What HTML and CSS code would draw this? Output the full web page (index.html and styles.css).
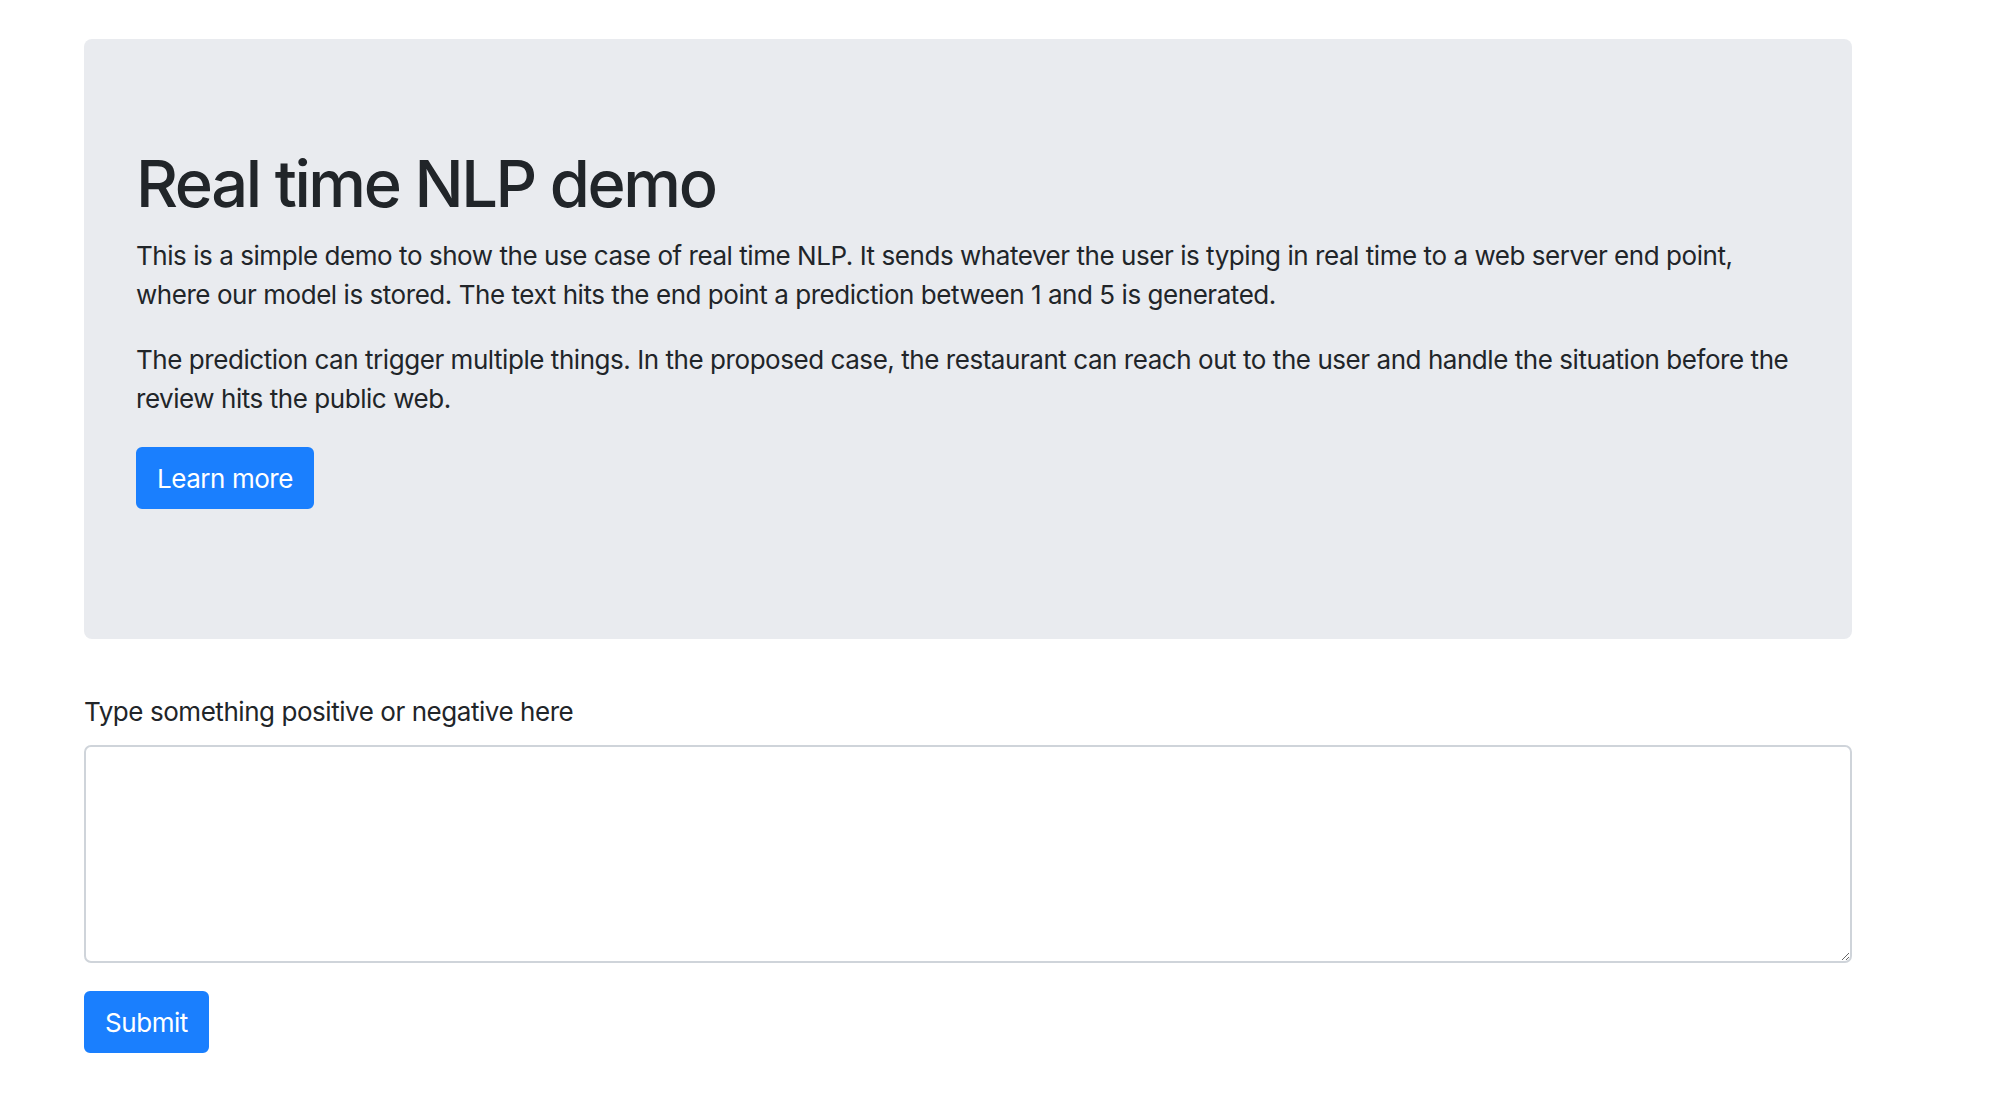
FILE: index.html
```html
<!DOCTYPE html>
<html lang="en">
<head>
<meta charset="utf-8">
<title>Real time NLP demo</title>
<link rel="stylesheet" href="styles.css">
</head>
<body>
<div class="container">
  <section class="jumbotron">
    <h1 class="title">Real time NLP demo</h1>
    <p class="text">This is a simple demo to show the use case of real time NLP. It sends whatever the user is typing in real time to a web server end point, where our model is stored. The text hits the end point a prediction between 1 and 5 is generated.</p>
    <p class="text">The prediction can trigger multiple things. In the proposed case, the restaurant can reach out to the user and handle the situation before the review hits the public web.</p>
    <p class="btn-row"><a class="btn" href="#">Learn more</a></p>
  </section>
  <form class="form">
    <div class="form-group">
      <label class="label" for="review">Type something positive or negative here</label>
      <textarea class="field" id="review" rows="5"></textarea>
    </div>
    <div class="actions"><button class="btn" type="button">Submit</button></div>
  </form>
</div>
</body>
</html>
```
FILE: styles.css
```css
* { box-sizing: border-box; }
html, body { margin: 0; padding: 0; background: #fff; }
body {
  font-family: Inter, "Noto Sans", "Liberation Sans", sans-serif;
  font-size: 26px;
  line-height: 39px;
  letter-spacing: -0.45px;
  color: #212529;
}
.container {
  width: 1768px;
  margin-left: 84px;
  padding-top: 39px;
}
.jumbotron {
  background: #e9ebef;
  border-radius: 8px;
  padding: 104px 52px;
  margin-bottom: 52px;
}
.title {
  margin: 0 0 13px;
  padding-top: 2px;
  font-size: 65px;
  line-height: 78px;
  font-weight: 500;
  letter-spacing: -2.4px;
}
.text {
  margin: 0 0 26px;
}
.btn-row {
  display: flex;
  margin: 0 0 26px;
  padding-top: 3px;
}
.btn {
  display: inline-block;
  font-family: inherit;
  font-size: 26px;
  line-height: 39px;
  letter-spacing: -0.45px;
  padding: 10px 19px 9px;
  border: 2px solid #1a7ffe;
  border-radius: 6px;
  background: #1a7ffe;
  color: #fff;
  text-decoration: none;
  cursor: pointer;
}
.form-group { margin-bottom: 28px; }
.label {
  display: block;
  padding-top: 1px;
  margin-bottom: 14px;
}
.field {
  display: block;
  width: 100%;
  height: 218px;
  border: 2px solid #cfd4da;
  border-radius: 7px;
  padding: 10px 19px;
  font-family: inherit;
  font-size: 26px;
  line-height: 39px;
  color: #495057;
  background: #fff;
}
.actions { display: flex; }
```
